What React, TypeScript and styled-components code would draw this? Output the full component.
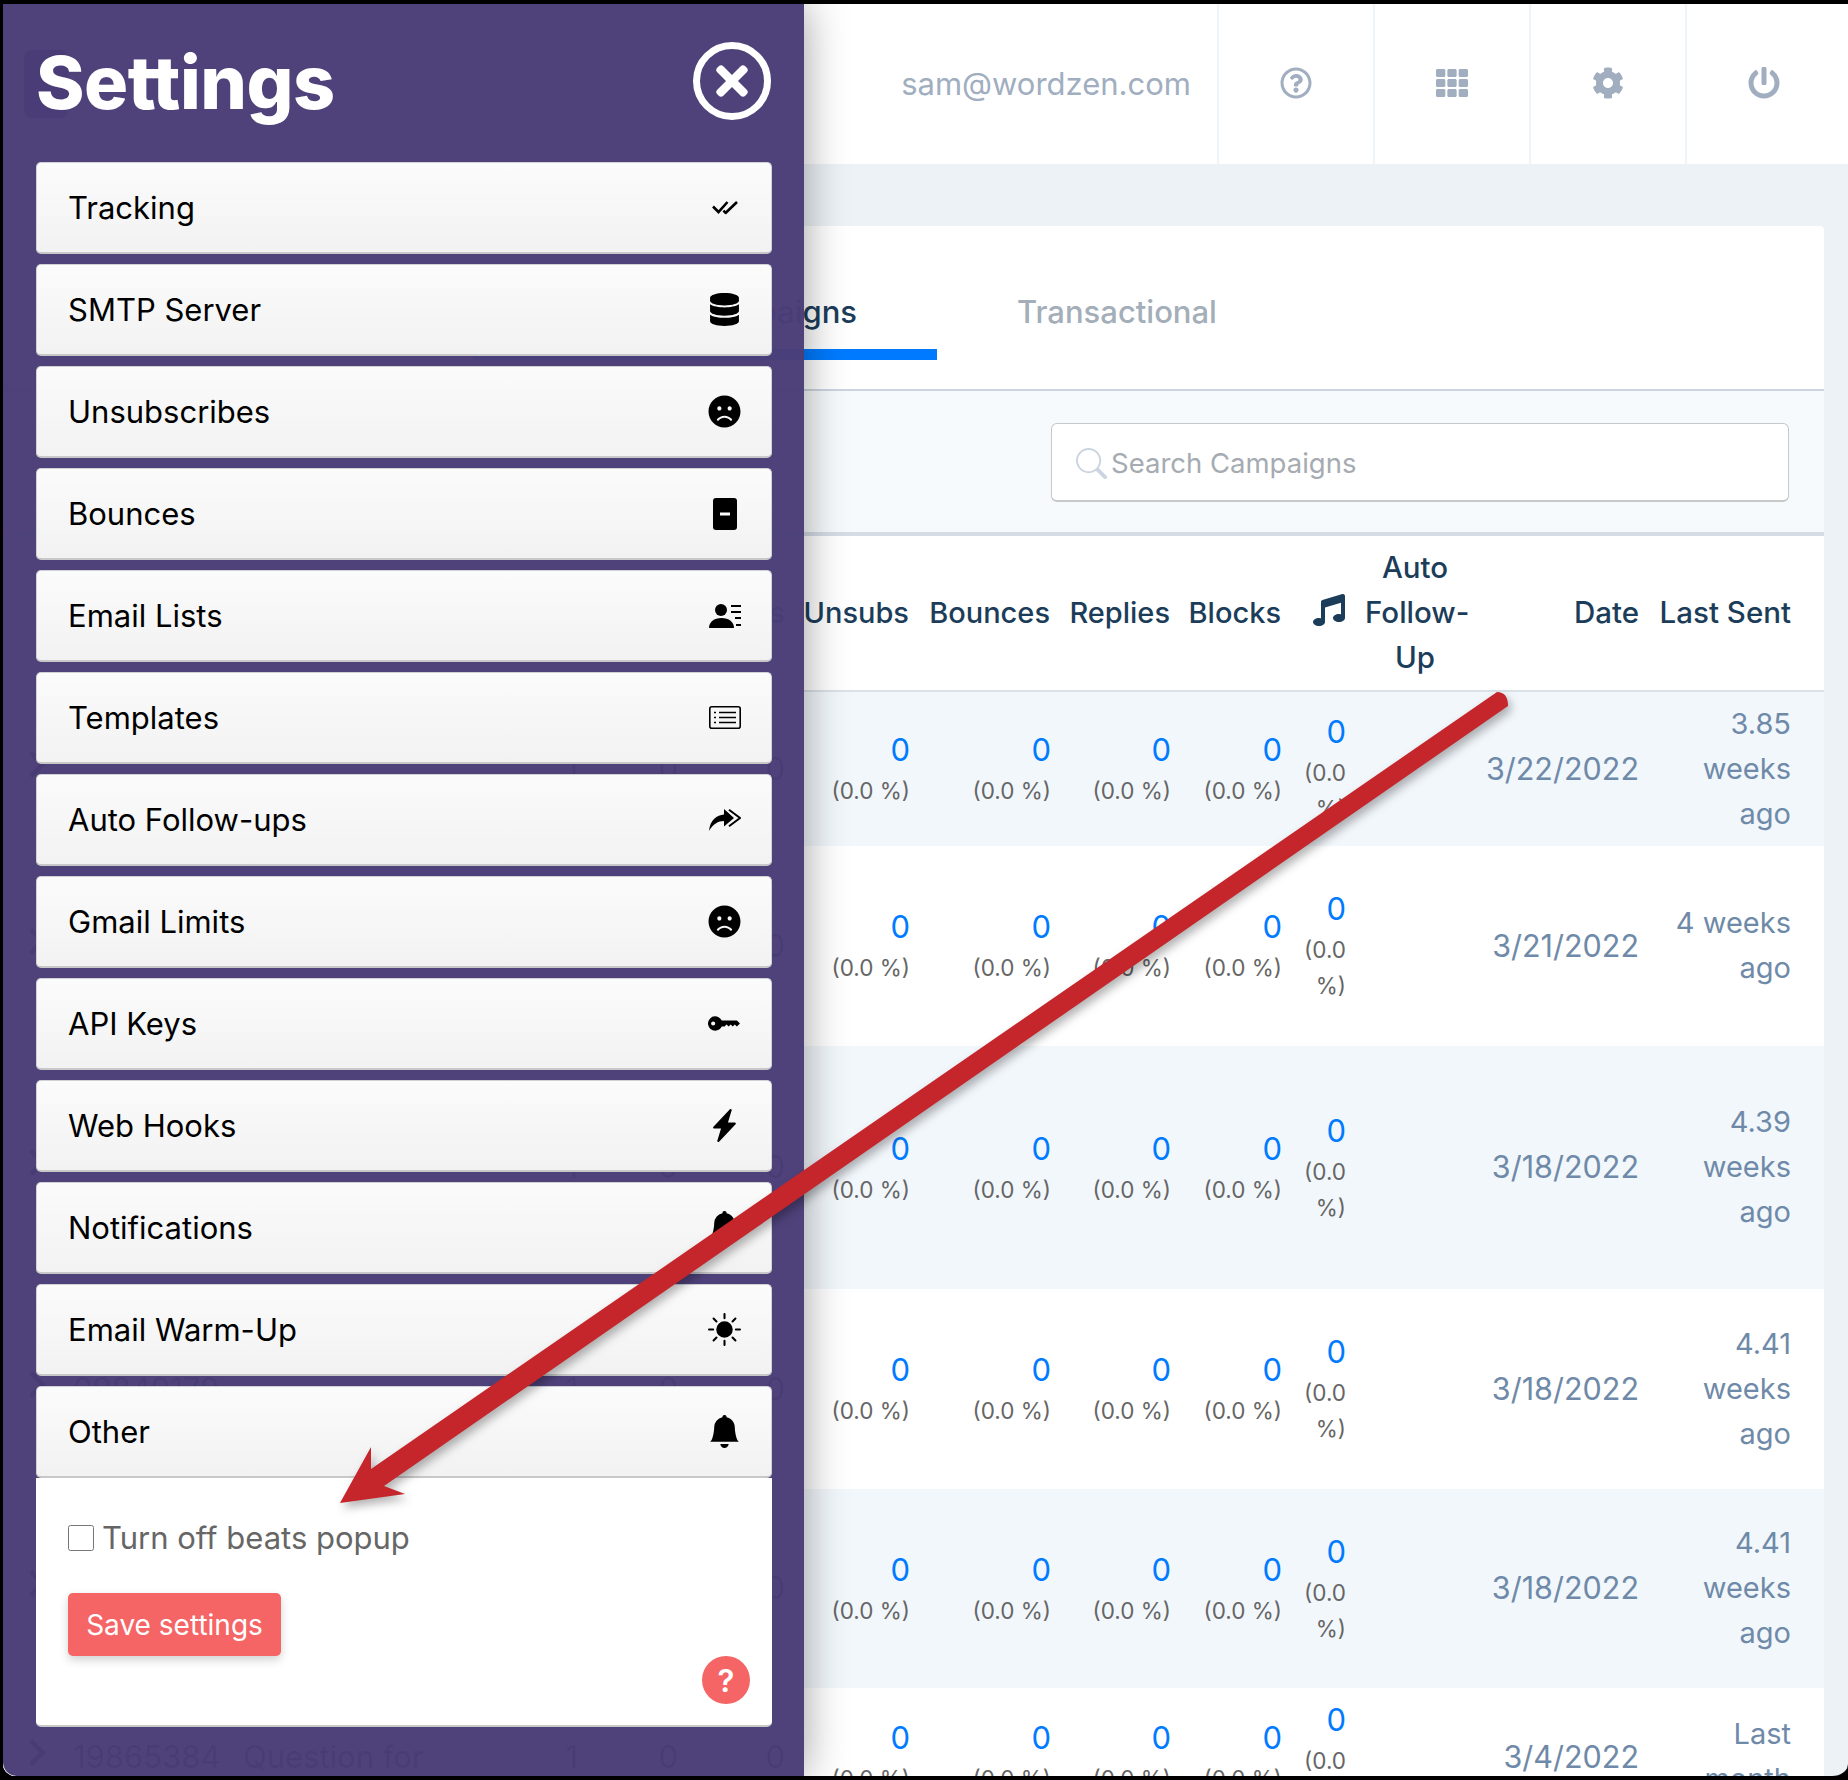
import React from 'react';
import styled, { createGlobalStyle } from 'styled-components';
import { BsBellFill, BsBrightnessHighFill, BsKeyFill, BsLightningChargeFill, BsSearch } from 'react-icons/bs';
import {
  FaChevronRight,
  FaCog,
  FaDatabase,
  FaFrown,
  FaMusic,
  FaPowerOff,
  FaRegQuestionCircle,
  FaTh,
  FaTimes
} from 'react-icons/fa';

const FONT = `Inter, "Noto Sans", sans-serif`;

const GlobalStyle = createGlobalStyle`
  html, body {
    margin: 0;
    padding: 0;
    background: #000;
    font-family: ${FONT};
  }
  * {
    box-sizing: border-box;
  }
`;

const Frame = styled.div`
  position: relative;
  width: 1848px;
  height: 1780px;
  overflow: hidden;
  background: #edf2f7;
  border: solid #000;
  border-width: 4px 0 4px 3px;
  border-radius: 0 0 16px 16px;
`;

const Main = styled.div`
  display: flex;
  flex-direction: column;
  height: 100%;
`;

const TopBar = styled.header`
  display: flex;
  align-items: stretch;
  height: 160px;
  flex-shrink: 0;
  background: #fff;
  padding-right: 7px;
`;

const LogoBlock = styled.div`
  align-self: center;
  width: 44px;
  height: 68px;
  margin-left: 21px;
  margin-right: auto;
  border-radius: 8px;
  background: #2a1a60;
`;

const UserEmail = styled.div`
  display: flex;
  align-items: center;
  padding: 0 26px 2px 0;
  font-size: 31px;
  color: #a0aec0;
`;

const TopBarButton = styled.div`
  display: flex;
  align-items: center;
  justify-content: center;
  width: 156px;
  padding-bottom: 2px;
  font-size: 32px;
  color: #a0aec0;
  border-left: 2px solid #eff4f9;
`;

const Card = styled.section`
  flex: 1;
  margin: 62px 24px 0 0;
  background: #fff;
  border-radius: 0 4px 0 0;
`;

const Tabs = styled.nav`
  display: flex;
  height: 165px;
  padding-left: 470px;
  border-bottom: 2px solid #cbd5e0;
`;

const Tab = styled.div<{ $active?: boolean }>`
  width: ${({ $active }) => ($active ? '464px' : 'auto')};
  height: 134px;
  padding: 67px 80px 0;
  font-size: 31px;
  font-weight: 500;
  text-align: right;
  color: ${({ $active }) => ($active ? '#1c3d5a' : '#a3aeb9')};
  border-bottom: ${({ $active }) => ($active ? '11px solid #007bff' : 'none')};
`;

const SearchStrip = styled.div`
  display: flex;
  justify-content: flex-end;
  height: 145px;
  padding: 32px 35px 0 0;
  background: #f7fafc;
  border-bottom: 4px solid #d5dce4;
`;

const SearchBox = styled.div`
  display: flex;
  align-items: center;
  gap: 4px;
  width: 738px;
  height: 79px;
  padding: 2px 0 0 24px;
  background: #fff;
  border: 1px solid #c6c8ca;
  border-bottom-width: 2px;
  border-radius: 6px;
  font-size: 27.5px;
  color: #a5abb1;
`;

const SearchIcon = styled(BsSearch)`
  color: #cbd5e0;
  font-size: 31px;
`;

const Table = styled.table`
  width: 100%;
  table-layout: fixed;
  border-collapse: collapse;
  font-size: 29px;
  line-height: 45px;
`;

const HeadCell = styled.th<{ $center?: boolean }>`
  height: 155px;
  padding: 0 10px 1px;
  font-size: 29.5px;
  font-weight: 500;
  color: #1c3d5a;
  text-align: ${({ $center }) => ($center ? 'center' : 'right')};
  border-bottom: 2px solid #dae1e7;
`;

const StatHeadCell = styled(HeadCell)`
  padding-right: 10px;
  padding-left: 0;
  font-size: 29px;
`;

const LastHeadCell = styled(HeadCell)`
  padding-right: 33px;
`;

const MusicIcon = styled(FaMusic)`
  font-size: 32px;
  vertical-align: -3px;
`;

const Row = styled.tr<{ $tinted: boolean; $height: number }>`
  height: ${({ $height }) => $height}px;
  background: ${({ $tinted }) => ($tinted ? '#f2f7fc' : '#fff')};
`;

const Cell = styled.td`
  padding: 0 10px 2px;
  text-align: right;
  vertical-align: middle;
`;

const StatBodyCell = styled(Cell)`
  padding-right: 9px;
`;

const GhostCell = styled(Cell)<{ $left?: boolean }>`
  color: #222;
  font-size: 31px;
  text-align: ${({ $left }) => ($left ? 'left' : 'right')};
`;

const DateCell = styled(Cell)`
  font-size: 30.5px;
  color: #6f8aa8;
`;

const LastSentCell = styled(Cell)`
  padding-right: 33px;
  color: #6f8aa8;
`;

const Count = styled.div`
  font-size: 31px;
  color: #007bff;
`;

const Percent = styled.div`
  margin-top: 1px;
  font-size: 22.5px;
  line-height: 36px;
  color: #666;
`;

const Panel = styled.aside`
  position: absolute;
  top: 0;
  left: 0;
  bottom: 0;
  width: 801px;
  padding: 0 32px 0 33px;
  background: rgba(75, 61, 120, 0.975);
  box-shadow: 0 0 44px rgba(0, 0, 0, 0.38);
  border-radius: 0 0 0 14px;
`;

const PanelHead = styled.div`
  display: flex;
  justify-content: space-between;
  align-items: center;
  height: 158px;
  padding-bottom: 4px;
`;

const PanelTitle = styled.h1`
  margin: 3px 0 0;
  font-size: 73.5px;
  font-weight: 800;
  letter-spacing: -0.5px;
  color: #fff;
`;

const CloseButton = styled.div`
  display: flex;
  align-items: center;
  justify-content: center;
  width: 78px;
  height: 78px;
  margin-right: 1px;
  border: 7px solid #fff;
  border-radius: 50%;
  color: #fff;
  font-size: 46px;
`;

const Accordion = styled.div`
  display: flex;
  flex-direction: column;
  gap: 10px;
`;

const AccordionItem = styled.div`
  display: flex;
  align-items: center;
  justify-content: space-between;
  height: 92px;
  padding: 0 30px 0 31px;
  background: linear-gradient(#fbfbfb, #f2f2f2);
  border: 1px solid #d0d3d5;
  border-bottom: 2px solid #c8c8c8;
  border-radius: 5px;
  font-size: 31px;
  color: #000;
`;

const ItemIcon = styled.span`
  display: flex;
  justify-content: center;
  width: 33px;
  font-size: 33px;
`;

const AccordionBody = styled.div`
  position: relative;
  margin-top: -10px;
  height: 249px;
  padding: 41px 32px 0;
  background: #fff;
  border-bottom: 2px solid #c8c8c8;
  border-radius: 0 0 5px 5px;
`;

const CheckRow = styled.label`
  display: flex;
  align-items: center;
  gap: 8px;
  font-size: 31px;
  color: #666;
`;

const CheckBox = styled.input`
  width: 26px;
  height: 26px;
  margin: 0;
`;

const SaveButton = styled.button`
  display: block;
  width: 213px;
  height: 63px;
  margin-top: 37px;
  padding: 0;
  border: none;
  border-radius: 5px;
  background: #f56565;
  color: #fff;
  font-family: ${FONT};
  font-size: 28px;
  box-shadow: 0 4px 10px rgba(0, 0, 0, 0.18);
`;

const HelpBadge = styled.div`
  position: absolute;
  right: 22px;
  bottom: 21px;
  display: flex;
  align-items: center;
  justify-content: center;
  width: 48px;
  height: 48px;
  border-radius: 50%;
  background: #f56565;
  color: #fff;
  font-size: 31px;
  font-weight: 600;
`;

const ArrowLayer = styled.svg`
  position: absolute;
  top: -4px;
  left: -3px;
  pointer-events: none;
  filter: drop-shadow(3px 5px 5px rgba(0, 0, 0, 0.3));
`;

const DoubleCheck = () => (
  <svg width="26" height="14" viewBox="0 0 26 14" fill="none" stroke="#000" strokeWidth="2.6">
    <path d="M1 5.5 6.5 11 15.5 1" />
    <path d="M13 12.5 25 1" />
    <path d="M11.5 9.5 13.5 12" />
  </svg>
);

const PhoneMinus = () => (
  <svg width="24" height="32" viewBox="0 0 24 32">
    <rect width="24" height="32" rx="3" fill="#000" />
    <rect x="7" y="14.5" width="10" height="3" fill="#fff" />
  </svg>
);

const PersonList = () => (
  <svg width="32" height="24" viewBox="0 0 32 24" fill="#000">
    <circle cx="12" cy="6" r="6" />
    <path d="M0 24c0-6 5-10 12.5-10S25 18 25 24z" />
    <rect x="22" y="1" width="10" height="2" />
    <rect x="22" y="7" width="10" height="2" />
    <rect x="26" y="13" width="6" height="2" />
    <rect x="27" y="20" width="5" height="2" />
  </svg>
);

const ListCard = () => (
  <svg width="32" height="23" viewBox="0 0 32 23" fill="none" stroke="#000" strokeWidth="1.6">
    <rect x="0.8" y="0.8" width="30.4" height="21.4" rx="2" />
    <path d="M5 6.5h3M5 11.5h3M5 16.5h3" strokeDasharray="2 1" />
    <path d="M10 6.5h17M10 11.5h17M10 16.5h17" />
  </svg>
);

const ReplyForward = () => (
  <svg width="32" height="22" viewBox="0 0 32 22">
    <path d="M0 22C1 11 8 6 15 5.5V0l10 9-10 8.5V12C9 12 4 15 0 22z" fill="#000" />
    <path d="M20 0.8 31 9l-11 8.2" fill="none" stroke="#000" strokeWidth="2" />
  </svg>
);

const settingsItems: { label: string; icon: React.ReactNode }[] = [
  { label: 'Tracking', icon: <DoubleCheck /> },
  { label: 'SMTP Server', icon: <FaDatabase /> },
  { label: 'Unsubscribes', icon: <FaFrown /> },
  { label: 'Bounces', icon: <PhoneMinus /> },
  { label: 'Email Lists', icon: <PersonList /> },
  { label: 'Templates', icon: <ListCard /> },
  { label: 'Auto Follow-ups', icon: <ReplyForward /> },
  { label: 'Gmail Limits', icon: <FaFrown /> },
  { label: 'API Keys', icon: <BsKeyFill /> },
  { label: 'Web Hooks', icon: <BsLightningChargeFill /> },
  { label: 'Notifications', icon: <BsBellFill /> },
  { label: 'Email Warm-Up', icon: <BsBrightnessHighFill /> },
  { label: 'Other', icon: <BsBellFill /> }
];

const columnWidths = [60, 170, 290, 65, 100, 107, 124, 141, 120, 111, 64, 120, 174, 175];

type Campaign = {
  id: string;
  subject: string;
  date: string;
  lastSent: string;
  height: number;
};

const campaigns: Campaign[] = [
  { id: '', subject: '', date: '3/22/2022', lastSent: '3.85 weeks ago', height: 155 },
  { id: '', subject: '', date: '3/21/2022', lastSent: '4 weeks ago', height: 200 },
  { id: '', subject: '', date: '3/18/2022', lastSent: '4.39 weeks ago', height: 243 },
  { id: '09849179', subject: '', date: '3/18/2022', lastSent: '4.41 weeks ago', height: 200 },
  { id: '', subject: '', date: '3/18/2022', lastSent: '4.41 weeks ago', height: 199 },
  { id: '19865384', subject: 'Question for', date: '3/4/2022', lastSent: 'Last month', height: 138 }
];

const StatCell = () => (
  <StatBodyCell>
    <Count>0</Count>
    <Percent>(0.0 %)</Percent>
  </StatBodyCell>
);

const App = () => (
  <>
    <GlobalStyle />
    <Frame>
      <Main>
        <TopBar>
          <LogoBlock />
          <UserEmail>sam@wordzen.com</UserEmail>
          <TopBarButton><FaRegQuestionCircle /></TopBarButton>
          <TopBarButton><FaTh /></TopBarButton>
          <TopBarButton><FaCog /></TopBarButton>
          <TopBarButton><FaPowerOff /></TopBarButton>
        </TopBar>
        <Card>
          <Tabs>
            <Tab $active>Campaigns</Tab>
            <Tab>Transactional</Tab>
          </Tabs>
          <SearchStrip>
            <SearchBox>
              <SearchIcon />
              Search Campaigns
            </SearchBox>
          </SearchStrip>
          <Table>
            <colgroup>
              {columnWidths.map((width, index) => (
                <col key={`col-${index}`} style={{ width }} />
              ))}
            </colgroup>
            <thead>
              <tr>
                <HeadCell />
                <HeadCell />
                <HeadCell />
                <HeadCell />
                <HeadCell />
                <HeadCell>Clicks</HeadCell>
                <StatHeadCell>Unsubs</StatHeadCell>
                <StatHeadCell>Bounces</StatHeadCell>
                <StatHeadCell>Replies</StatHeadCell>
                <StatHeadCell>Blocks</StatHeadCell>
                <HeadCell><MusicIcon /></HeadCell>
                <HeadCell $center>Auto Follow-Up</HeadCell>
                <HeadCell>Date</HeadCell>
                <LastHeadCell>Last Sent</LastHeadCell>
              </tr>
            </thead>
            <tbody>
              {campaigns.map((campaign, index) => (
                <Row key={`row-${index}`} $tinted={index % 2 === 0} $height={campaign.height}>
                  <GhostCell><FaChevronRight /></GhostCell>
                  <GhostCell $left>{campaign.id}</GhostCell>
                  <GhostCell $left>{campaign.subject}</GhostCell>
                  <GhostCell>1</GhostCell>
                  <GhostCell>0</GhostCell>
                  <GhostCell>0</GhostCell>
                  <StatCell />
                  <StatCell />
                  <StatCell />
                  <StatCell />
                  <StatCell />
                  <Cell />
                  <DateCell>{campaign.date}</DateCell>
                  <LastSentCell>{campaign.lastSent}</LastSentCell>
                </Row>
              ))}
            </tbody>
          </Table>
        </Card>
      </Main>

      <Panel>
        <PanelHead>
          <PanelTitle>Settings</PanelTitle>
          <CloseButton><FaTimes /></CloseButton>
        </PanelHead>
        <Accordion>
          {settingsItems.map(item => (
            <AccordionItem key={item.label}>
              {item.label}
              <ItemIcon>{item.icon}</ItemIcon>
            </AccordionItem>
          ))}
          <AccordionBody>
            <CheckRow>
              <CheckBox type="checkbox" />
              Turn off beats popup
            </CheckRow>
            <SaveButton>Save settings</SaveButton>
            <HelpBadge>?</HelpBadge>
          </AccordionBody>
        </Accordion>
      </Panel>

      <ArrowLayer width="1848" height="1780" viewBox="0 0 1848 1780">
        <path
          d="M1497 692 Q1508 692 1508 706 L384 1486 L405 1494 L340 1503 L371 1447 L371 1469 Z"
          fill="#c4262b"
        />
      </ArrowLayer>
    </Frame>
  </>
);

export default App;
